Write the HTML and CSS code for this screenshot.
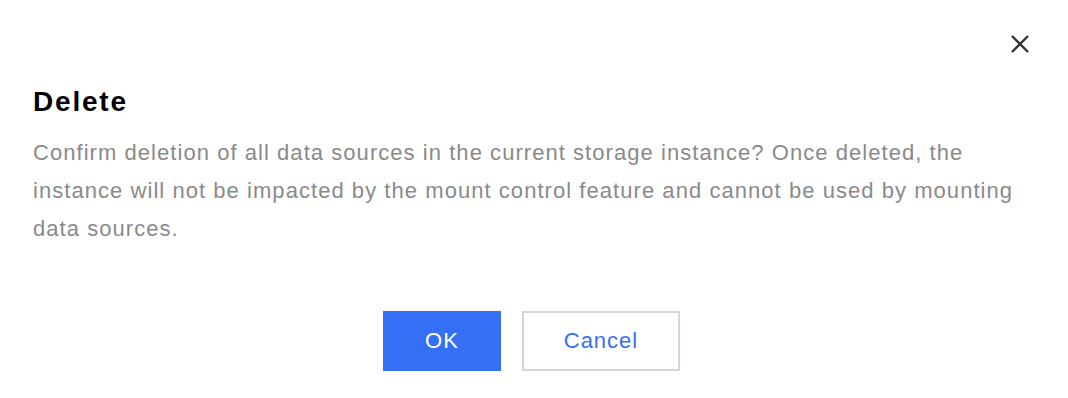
FILE: index.html
```html
<!DOCTYPE html>
<html>
<head>
<meta charset="utf-8">
<link rel="stylesheet" href="styles.css">
</head>
<body>
<div class="dialog">
  <div class="head">
    <button class="close" aria-label="Close">
      <svg width="18" height="18" viewBox="0 0 18 18"><path d="M1 1 L17 17 M17 1 L1 17" stroke="#333" stroke-width="2.4" stroke-linecap="butt"/></svg>
    </button>
  </div>
  <h2 class="title">Delete</h2>
  <p class="msg">Confirm deletion of all data sources in the current storage instance? Once deleted, the instance will not be impacted by the mount control feature and cannot be used by mounting data sources.</p>
  <div class="actions">
    <button class="btn primary">OK</button>
    <button class="btn secondary">Cancel</button>
  </div>
</div>
</body>
</html>
```

FILE: styles.css
```css
html, body {
  margin: 0;
  padding: 0;
  background: #fff;
}
body {
  font-family: "Liberation Sans", Arial, sans-serif;
}
.dialog {
  width: 1068px;
  height: 398px;
  box-sizing: border-box;
  padding: 33px 32px 0 33px;
  display: flex;
  flex-direction: column;
}
.head {
  display: flex;
  justify-content: flex-end;
  height: 22px;
}
.close {
  border: 0;
  background: none;
  padding: 0;
  margin-right: 5px;
  width: 22px;
  height: 22px;
  display: flex;
  align-items: center;
  justify-content: center;
}
.title {
  margin: 31px 0 0;
  font-size: 28px;
  font-weight: 700;
  letter-spacing: 1.8px;
  line-height: 32px;
  color: #000;
}
.msg {
  margin: 16px 0 0;
  font-size: 22px;
  letter-spacing: 1.05px;
  line-height: 38px;
  color: #8a8a8a;
}
.actions {
  margin-top: 63px;
  padding-right: 6px;
  display: flex;
  justify-content: center;
  gap: 21px;
}
.btn {
  height: 60px;
  font-family: "Liberation Sans", Arial, sans-serif;
  font-size: 22px;
  letter-spacing: 1px;
  box-sizing: border-box;
  cursor: pointer;
}
.primary {
  width: 118px;
  background: #356ff6;
  color: #fff;
  border: 0;
}
.secondary {
  width: 158px;
  background: #fff;
  color: #356ff6;
  border: 2px solid #d2d6de;
}
```
